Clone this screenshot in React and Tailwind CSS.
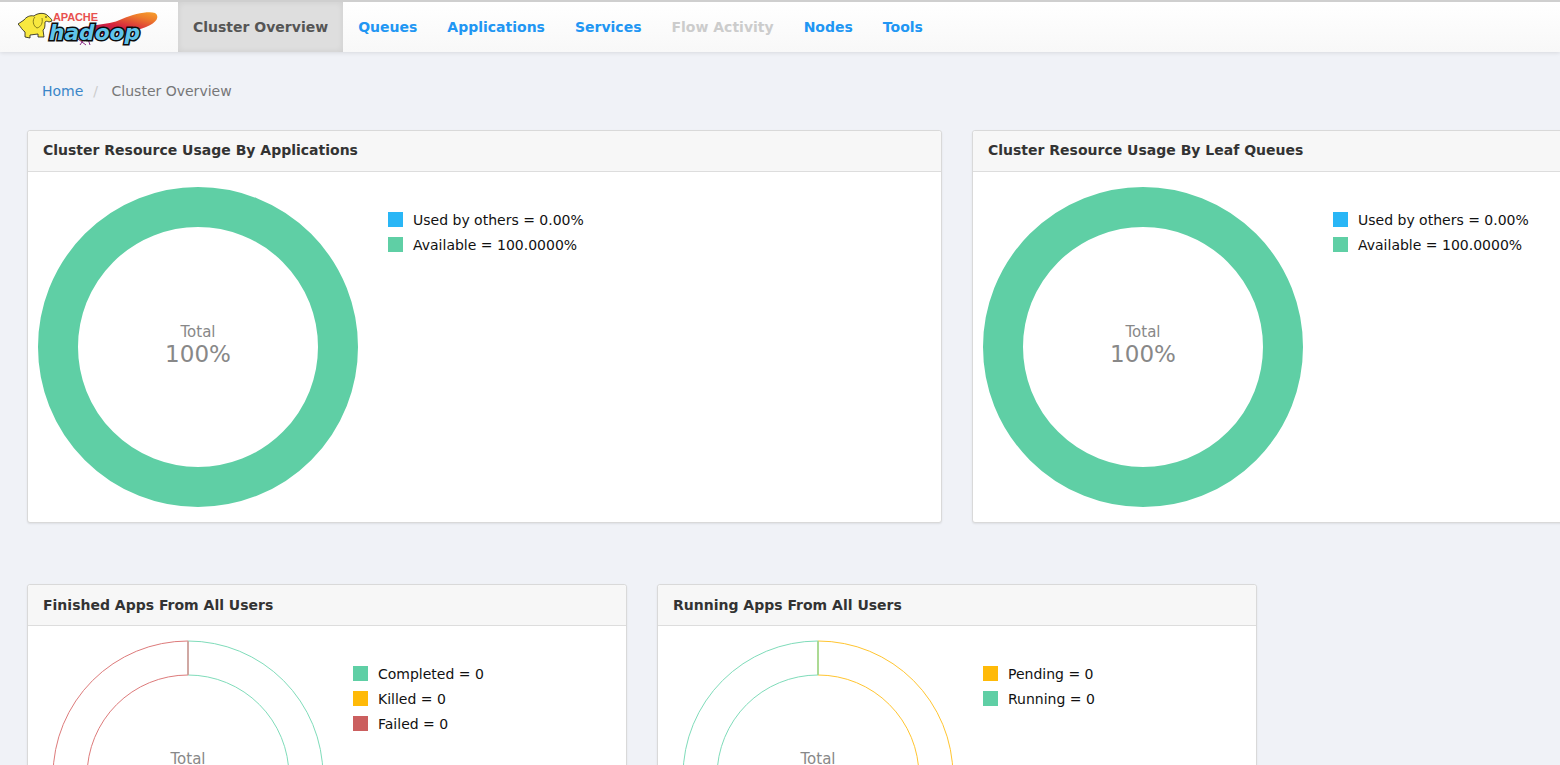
import React from "react";

const font = "font-['DejaVu_Sans',sans-serif]";

const HadoopLogo = () => (
  <svg width="142" height="40" viewBox="0 0 142 40">
    <defs>
      <linearGradient id="feather" x1="0" y1="1" x2="1" y2="0">
        <stop offset="0" stopColor="#7a1f6e" />
        <stop offset="0.45" stopColor="#d4213f" />
        <stop offset="0.8" stopColor="#ee7d2b" />
        <stop offset="1" stopColor="#f7a02c" />
      </linearGradient>
    </defs>
    {/* feather */}
    <path d="M52 27C70 15 88 20 104 12C116 7 130 4 137 6C142 9 139 16 128 20C116 25 100 28 52 27Z" fill="url(#feather)" />
    <path d="M60 32L68 38M66 32L62 38M70 32L72 38" stroke="#8a2a86" strokeWidth="1" fill="none" />
    <text x="35" y="14" fontSize="11" fill="#e8504f" textLength="45" fontFamily="Liberation Sans, sans-serif">APACHE</text>
    {/* elephant */}
    <path d="M0 17L6 13C8 10 12 8 16 9C19 6 27 5 30 9C32 11 34 12 34 14L31 15C29 14 28 14 27 15C27 19 27 22 25 23L26 30L20 30L20 27L12 28L12 31L7 30L7 25C4 23 3 20 0 17Z" fill="#f8e83f" stroke="#1a1a1a" strokeWidth="0.8" strokeLinejoin="round" />
    <path d="M17 10C14 13 15 19 19 21C23 20 25 16 24 11" fill="none" stroke="#6a6512" strokeWidth="0.8" />
    <circle cx="28" cy="10" r="0.8" fill="#1a1a1a" />
    {/* wordmark */}
    <text x="31" y="33" fontSize="21" fontWeight="700" fontStyle="italic" fontFamily="DejaVu Sans, sans-serif" fill="#5fc3ea" stroke="#0b0b0b" strokeWidth="3" paintOrder="stroke" textLength="91" lengthAdjust="spacingAndGlyphs">hadoop</text>
  </svg>
);

const NavItem = ({ label, active, disabled }) => {
  if (active) {
    return (
      <a className="flex items-center h-full px-[15px] text-[#555] bg-[#dedede] shadow-[inset_0_0_6px_rgba(0,0,0,0.08)]">
        {label}
      </a>
    );
  }
  return (
    <a className={"flex items-center h-full px-[15px] " + (disabled ? "text-[#ccc]" : "text-[#2196f3]")}>
      {label}
    </a>
  );
};

const Navbar = () => (
  <nav className="h-[52px] border-t-2 border-[#cfcfcf] bg-gradient-to-b from-white to-[#f8f8f8] shadow-[0_1px_4px_rgba(0,0,0,0.1)] flex items-center text-sm font-bold">
    <div className="w-[178px] pl-[18px] shrink-0 flex items-center">
      <HadoopLogo />
    </div>
    <NavItem label="Cluster Overview" active />
    <NavItem label="Queues" />
    <NavItem label="Applications" />
    <NavItem label="Services" />
    <NavItem label="Flow Activity" disabled />
    <NavItem label="Nodes" />
    <NavItem label="Tools" />
  </nav>
);

const Legend = ({ items, className }) => (
  <ul className={"pt-10 flex flex-col gap-[10px] text-sm text-[#111] " + className}>
    {items.map((it) => (
      <li key={it.label} className="flex items-center gap-[10px] h-[15px]">
        <span className={"w-[15px] h-[15px] " + it.color} />
        <span>{it.label}</span>
      </li>
    ))}
  </ul>
);

const Panel = ({ title, width, headClass, children }) => (
  <div className={"shrink-0 bg-white border border-[#d9d9d9] rounded-[3px] shadow-[0_1px_2px_rgba(0,0,0,0.08)] " + width}>
    <div className={"h-[41px] px-[15px] flex items-center bg-[#f7f7f7] border-b border-[#dddddd] text-sm font-bold text-[#333] rounded-t-[3px] " + (headClass || "")}>
      {title}
    </div>
    <div className="flex pl-[10px]">{children}</div>
  </div>
);

const BigDonut = () => (
  <svg width="320" height="320" viewBox="0 0 320 320" className="block shrink-0">
    <circle cx="160" cy="160" r="140" fill="none" stroke="#5fcfa5" strokeWidth="40" />
    <text x="160" y="150" textAnchor="middle" fontSize="15" fill="#888">Total</text>
    <text x="160" y="175" textAnchor="middle" fontSize="23" fill="#888">100%</text>
  </svg>
);

// zero-count ring: two half outlines and the seam at the top
const ZeroDonut = ({ right, left, seam }) => (
  <svg width="300" height="300" viewBox="0 0 300 300" className="block shrink-0">
    <path d="M150 15A135 135 0 0 1 150 285L150 251A101 101 0 0 0 150 49Z" fill="none" stroke={right} />
    <path d="M150 15A135 135 0 0 0 150 285L150 251A101 101 0 0 1 150 49Z" fill="none" stroke={left} />
    <line x1="150" y1="15" x2="150" y2="49" stroke={seam} strokeWidth="1.5" />
    <text x="150" y="138" textAnchor="middle" fontSize="15" fill="#888">Total</text>
  </svg>
);

const usage = [
  { label: "Used by others = 0.00%", color: "bg-[#29b6f6]" },
  { label: "Available = 100.0000%", color: "bg-[#5fcfa5]" },
];

export default function App() {
  return (
    <div className={"h-[765px] w-[1560px] overflow-hidden bg-[#f0f2f7] " + font}>
      <Navbar />
      <div className="pl-[27px]">
        <div className="h-[78px] flex items-center pl-[15px] text-sm">
          <a className="text-[#3a86c8]">Home</a>
          <span className="text-[#ccc] px-[10px]">/</span>
          <span className="text-[#777] pl-[3.5px]">Cluster Overview</span>
        </div>
        <div className="flex gap-[30px] h-[393px]">
          <Panel title="Cluster Resource Usage By Applications" width="w-[915px]" headClass="pb-[2px]">
            <div className="pt-[15px] pb-[15px]"><BigDonut /></div>
            <Legend items={usage} className="ml-[30px]" />
          </Panel>
          <Panel title="Cluster Resource Usage By Leaf Queues" width="w-[915px]" headClass="pb-[2px]">
            <div className="pt-[15px] pb-[15px]"><BigDonut /></div>
            <Legend items={usage} className="ml-[30px]" />
          </Panel>
        </div>
        <div className="flex gap-[30px] mt-[61px]">
          <Panel title="Finished Apps From All Users" width="w-[600px]">
            <ZeroDonut right="#7fdcba" left="#dd7b7b" seam="#d1a5a0" />
            <Legend
              className="ml-[15px]"
              items={[
                { label: "Completed = 0", color: "bg-[#5fcfa5]" },
                { label: "Killed = 0", color: "bg-[#ffba08]" },
                { label: "Failed = 0", color: "bg-[#cb5f5f]" },
              ]}
            />
          </Panel>
          <Panel title="Running Apps From All Users" width="w-[600px]">
            <ZeroDonut right="#ffc530" left="#7fdcba" seam="#a6d98e" />
            <Legend
              className="ml-[15px]"
              items={[
                { label: "Pending = 0", color: "bg-[#ffba08]" },
                { label: "Running = 0", color: "bg-[#5fcfa5]" },
              ]}
            />
          </Panel>
        </div>
      </div>
    </div>
  );
}
